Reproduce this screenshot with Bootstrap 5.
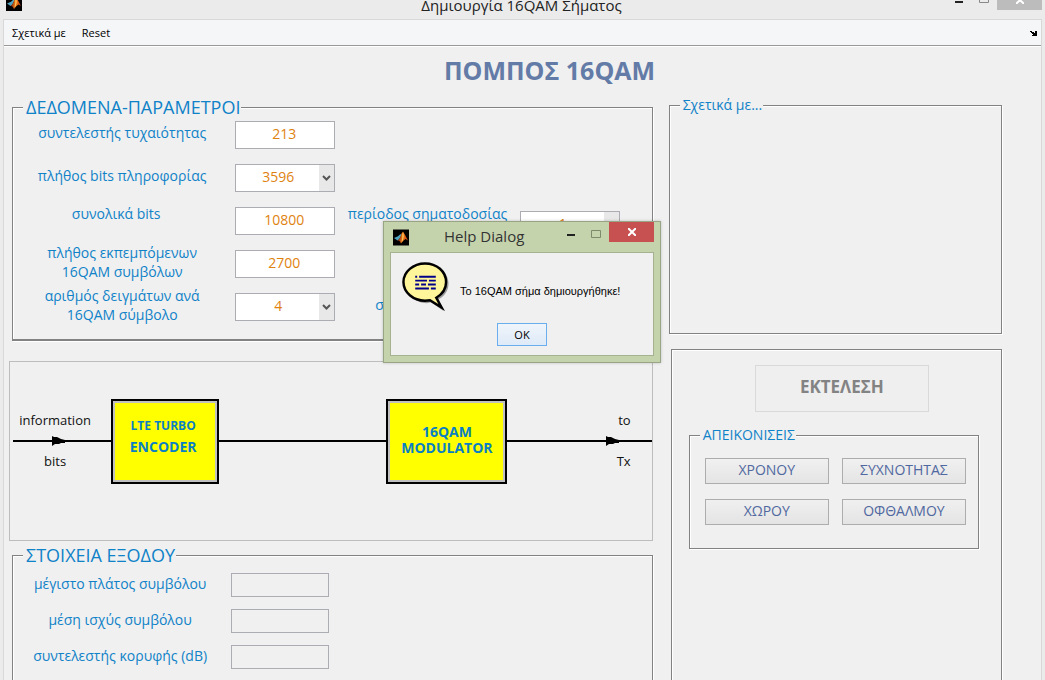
<!DOCTYPE html>
<html lang="el">
<head>
<meta charset="utf-8">
<meta name="viewport" content="width=device-width, initial-scale=1">
<title>Δημιουργία 16QAM Σήματος</title>
<link href="https://cdn.jsdelivr.net/npm/bootstrap@5.3.0/dist/css/bootstrap.min.css" rel="stylesheet">
<style>
  :root { --face: #f0f0f0; --ink: #0f82c8; --etch: #828282; --frame: #d8d8d8; }
  body { background: #ebebeb; font-family: "Open Sans", "Noto Sans", sans-serif; font-size: 14px; line-height: 19px; color: #000; }
  .plain-btn { border: 0; padding: 0; background: none; line-height: 0; }
  .app-window { height: 100vh; }
  .title-bar { height: 19px; padding: 0 3px 0 6px; }
  .title-text { font-size: 15px; line-height: 28px; color: #222; padding-left: 66px; }
  .title-close { width: 45px; height: 28px; margin-bottom: 9px; background: #bcbcbc; }
  .client { border: 1px solid var(--frame); border-bottom: 0; margin: 0 3px; background: var(--face); }
  .menu-strip { height: 26px; padding: 0 4px 0 8px; background: #f5f6f8; border-bottom: 1px solid #999; box-shadow: 0 1px #fff; }
  .menu-strip a { color: #000; font-size: 11px; text-decoration: none; }
  .page-title { font-size: 25px; line-height: 30px; font-weight: 700; color: #637ba7; margin: 9px 0 0; padding-left: 54px; }
  .workspace { display: grid; grid-template-columns: 643fr 333fr; column-gap: 16px; padding: 11px 39px 0 5px; }

  .etched { border: 1px solid var(--etch); box-shadow: 1px 1px #fff, inset 1px 1px #fff; min-width: 0; }
  .etched > legend { float: none; width: auto; margin: 0 0 0 10px; padding: 0 1px 0 3px; background: var(--face); color: var(--ink); }
  .legend-lg { font-size: 18px; line-height: 22px; }
  .legend-sm { font-size: 14px; line-height: 18px; }
  .open-end { border-bottom: 0; }
  .params { margin: 0 0 20px 3px; padding-bottom: 11px; border-bottom-width: 2px; }
  .results { margin-left: 3px; }
  .form-cells { display: grid; grid-template-columns: 222fr 100px 184fr 100px 32px; grid-auto-rows: 43px; align-items: center; margin-top: -5px; }
  .form-cells.outputs { grid-template-columns: 218fr 98px 322fr; grid-auto-rows: 36px; margin-top: 1px; }
  .form-label-cell { text-align: center; color: var(--ink); padding: 0 4px 4px 0; }
  .form-label-cell.raised { align-self: start; padding-top: 5px; padding-bottom: 0; }
  .form-label-cell.period-label { padding-right: 0; }
  .form-label-cell.lead-in { text-align: left; padding-left: 40px; }
  .field { width: 100%; height: 28px; border: 1px solid #abadb3; border-radius: 0; background-color: #fff; color: #e0820f; text-align: center; padding: 0 2px 3px 0; }
  select.field { appearance: none; text-align-last: center; padding-right: 14px;
    background: url("data:image/svg+xml,%3Csvg xmlns='http://www.w3.org/2000/svg' viewBox='0 0 15 26'%3E%3Cpath fill='%23e8e8e8' d='M0 0h15v26H0z'/%3E%3Cpath d='M4 11l3.5 3.5L11 11' fill='none' stroke='%23555' stroke-width='2'/%3E%3C/svg%3E") right center / 15px 26px no-repeat #fff; }
  .field.blank { height: 24px; background: var(--face); }

  .chain { display: flex; align-items: center; height: 180px; padding: 0 0 20px 3px; border: 1px solid #bdbdbd; margin-bottom: 3px; }
  .wire { display: grid; grid-template-rows: 1fr 2px 1fr; height: 84px; font-size: 13px; color: #111; }
  .wire-line { position: relative; background: #000; height: 2px; }
  .wire-line svg { position: absolute; top: -4px; left: 39px; }
  .wire-text { text-align: center; padding-right: 14px; }
  .wire-out .wire-line svg { left: auto; right: 32px; }
  .wire-out .wire-text { text-align: right; padding-right: 21px; }
  .wire-top { align-self: end; padding-bottom: 10px; }
  .wire-bottom { align-self: start; padding-top: 10px; }
  .block { flex: none; width: 108px; height: 85px; border: 2px solid #000; box-shadow: inset 0 0 0 2px #c0c0c0; background: #ff0; color: #0a80c4; font-size: 14px; font-weight: 700; text-align: center; display: flex; flex-direction: column; justify-content: center; }
  .block-enc { line-height: 21px; padding: 0 4px 10px 0; }
  .block-enc small { font-size: 12px; font-weight: 700; }
  .block-mod { width: 121px; line-height: 16px; padding-bottom: 3px; }

  .about { height: 238px; margin-bottom: 15px; }
  .actions { margin-left: 2px; padding: 15px 22px 0 17px; }
  .run-btn { width: 174px; height: 47px; border: 1px solid #d9d9d9; background: #efefef; color: #838383; font-size: 17px; font-weight: 700; padding: 0 0 4px; }
  .plots { margin-top: 14px; }
  .plot-grid { display: grid; grid-template-columns: 1fr 1fr; gap: 15px 13px; padding: 14px 12px 23px 15px; }
  .plot-btn { height: 26px; border: 1px solid #adadad; background: linear-gradient(#f0f0f0, #e4e4e4); color: #5068a0; padding: 0 0 3px; }

  .help-dialog { position: absolute; left: 383px; top: 221px; width: 278px; background: #c5d3ad; border: 1px solid #98a585; padding: 0 6px 6px; box-shadow: 0 0 3px rgba(0,0,0,.2); }
  .help-head { height: 30px; padding-left: 3px; }
  .help-title { font-size: 15px; color: #333; margin: 0 0 0 35px; font-weight: 400; line-height: 28px; }
  .help-close { width: 45px; height: 20px; background: #c75050; }
  .help-body { border: 1px solid #a5b28f; background: var(--face); padding: 9px 10px; }
  .help-text { font: 11px/16px "Liberation Sans", Arial, sans-serif; margin: 0 0 0 10px; padding-top: 8px; white-space: nowrap; }
  .ok-btn { width: 50px; height: 23px; border: 1px solid #6aaeee; background: linear-gradient(#f0f5fa, #deeaf8); font-size: 11px; padding: 0; color: #000; line-height: 20px; }
</style>
</head>
<body>
<svg width="0" height="0" class="position-absolute" aria-hidden="true">
  <defs>
    <linearGradient id="flame" x1="0" x2="1"><stop offset="0" stop-color="#7a1c10"/><stop offset=".5" stop-color="#f0801c"/><stop offset="1" stop-color="#c43a10"/></linearGradient>
    <symbol id="matlab" viewBox="0 0 16 16">
      <path fill="#000" d="M0 0h16v16H0z"/>
      <path fill="#4fa3c0" d="M1 8.500l4-1.800 2.500-2.200 1 1-2.500 4.500-1.500 1z"/>
      <path fill="url(#flame)" d="M4.500 11L7 8.500 8.500 4 10 2l1.500 2.500L15 11l-2.500-1.500-2 1.500L8 14l-1.500-2.500z"/>
      <path fill="#ffc95c" d="M9.500 4l.8-.7.5 3.700-1.300 4.500-1 .8.800-4z"/>
    </symbol>
    <symbol id="arrowhead" viewBox="0 0 14 10"><path d="M0 0l2 1h3l4 2 4 1v3h-4l-2 1H3L0 10z"/></symbol>
  </defs>
</svg>

<div class="app-window d-flex flex-column overflow-hidden position-relative">
  <header class="title-bar d-flex align-items-end flex-shrink-0">
    <svg width="16" height="16" class="flex-shrink-0 mb-2" aria-hidden="true"><use href="#matlab"/></svg>
    <div class="title-text flex-fill text-center">Δημιουργία 16QAM Σήματος</div>
    <div class="d-flex align-items-end">
      <button class="plain-btn pb-3 me-3" aria-label="Ελαχιστοποίηση"><svg width="8" height="2"><path fill="#222" d="M0 0h8v2H0z"/></svg></button>
      <button class="plain-btn pb-3 me-2" aria-label="Μεγιστοποίηση"><svg width="10" height="8"><path fill="none" stroke="#888" d="M.5.5h9v7h-9z"/></svg></button>
      <button class="plain-btn title-close" aria-label="Κλείσιμο"><svg width="8" height="8" class="mt-2"><path stroke="#fff" stroke-width="2" d="M0 0l8 8M8 0L0 8"/></svg></button>
    </div>
  </header>

  <div class="client flex-fill d-flex flex-column">
    <nav class="menu-strip d-flex align-items-center gap-3">
      <a href="#">Σχετικά με</a>
      <a href="#">Reset</a>
      <svg width="7" height="6" class="ms-auto" aria-hidden="true"><path d="M0 1h2v1h2v1h1V1h2v5H2V5h1V4H2V3H1V2H0z"/></svg>
    </nav>
    <h1 class="page-title text-center">ΠΟΜΠΟΣ 16QAM</h1>

    <main class="workspace flex-fill">
      <div class="d-flex flex-column">
        <fieldset class="etched params">
          <legend class="legend-lg">ΔΕΔΟΜΕΝΑ-ΠΑΡΑΜΕΤΡΟΙ</legend>
          <div class="form-cells">
            <label for="seed" class="form-label-cell">συντελεστής τυχαιότητας</label>
            <input id="seed" class="field" value="213"><span></span><span></span><span></span>

            <label for="info" class="form-label-cell">πλήθος bits πληροφορίας</label>
            <select id="info" class="field"><option>3596</option></select><span></span><span></span><span></span>

            <label for="total" class="form-label-cell raised pe-3">συνολικά bits</label>
            <input id="total" class="field" value="10800">
            <label for="period" class="form-label-cell raised period-label">περίοδος σηματοδοσίας</label>
            <select id="period" class="field mt-2"><option>1</option></select><span></span>

            <label for="symbols" class="form-label-cell">πλήθος εκπεμπόμενων<br>16QAM συμβόλων</label>
            <input id="symbols" class="field" value="2700"><span></span><span></span><span></span>

            <label for="samples" class="form-label-cell">αριθμός δειγμάτων ανά<br>16QAM σύμβολο</label>
            <select id="samples" class="field"><option>4</option></select>
            <span class="form-label-cell lead-in">σ</span><span></span><span></span>
          </div>
        </fieldset>

        <section class="chain">
          <div class="wire" style="flex:98">
            <span class="wire-text wire-top">information</span>
            <div class="wire-line"><svg width="14" height="10"><use href="#arrowhead"/></svg></div>
            <span class="wire-text wire-bottom">bits</span>
          </div>
          <div class="block block-enc"><small>LTE TURBO</small><span>ENCODER</span></div>
          <div class="wire" style="flex:167"><span></span><div class="wire-line"></div><span></span></div>
          <div class="block block-mod"><span>16QAM</span><span>MODULATOR</span></div>
          <div class="wire wire-out" style="flex:144">
            <span class="wire-text wire-top">to</span>
            <div class="wire-line"><svg width="14" height="10"><use href="#arrowhead"/></svg></div>
            <span class="wire-text wire-bottom">Tx</span>
          </div>
        </section>

        <fieldset class="etched open-end results flex-fill">
          <legend class="legend-lg">ΣΤΟΙΧΕΙΑ ΕΞΟΔΟΥ</legend>
          <div class="form-cells outputs">
            <label for="peak" class="form-label-cell">μέγιστο πλάτος συμβόλου</label><input id="peak" class="field blank" readonly><span></span>
            <label for="power" class="form-label-cell">μέση ισχύς συμβόλου</label><input id="power" class="field blank" readonly><span></span>
            <label for="crest" class="form-label-cell">συντελεστής κορυφής (dB)</label><input id="crest" class="field blank" readonly><span></span>
          </div>
        </fieldset>
      </div>

      <div class="d-flex flex-column">
        <fieldset class="etched about">
          <legend class="legend-sm">Σχετικά με...</legend>
        </fieldset>
        <section class="etched open-end actions flex-fill">
          <div class="text-center ps-3"><button class="run-btn" disabled>ΕΚΤΕΛΕΣΗ</button></div>
          <fieldset class="etched plots">
            <legend class="legend-sm">ΑΠΕΙΚΟΝΙΣΕΙΣ</legend>
            <div class="plot-grid">
              <button class="plot-btn">ΧΡΟΝΟΥ</button>
              <button class="plot-btn">ΣΥΧΝΟΤΗΤΑΣ</button>
              <button class="plot-btn">ΧΩΡΟΥ</button>
              <button class="plot-btn">ΟΦΘΑΛΜΟΥ</button>
            </div>
          </fieldset>
        </section>
      </div>
    </main>
  </div>

  <div class="help-dialog" role="dialog" aria-labelledby="help-title">
    <div class="help-head d-flex align-items-start">
      <svg width="16" height="17" class="align-self-center" aria-hidden="true"><use href="#matlab"/></svg>
      <h2 id="help-title" class="help-title">Help Dialog</h2>
      <div class="d-flex ms-auto align-items-start">
        <button class="plain-btn pt-2 mt-1 me-3" aria-label="Ελαχιστοποίηση"><svg width="8" height="2"><path fill="#222" d="M0 0h8v2H0z"/></svg></button>
        <button class="plain-btn pt-1 mt-1 me-2" aria-label="Μεγιστοποίηση"><svg width="10" height="8"><path fill="none" stroke="#7d8a6c" d="M.5.5h9v7h-9z"/></svg></button>
        <button class="plain-btn help-close" aria-label="Κλείσιμο"><svg width="8" height="8"><path stroke="#fff" stroke-width="2" d="M0 0l8 8M8 0L0 8"/></svg></button>
      </div>
    </div>
    <div class="help-body">
      <div class="d-flex align-items-center">
        <svg width="49" height="49" viewBox="0 0 49 50" class="flex-shrink-0" aria-hidden="true">
          <path fill="#999" d="M26 3c14 0 22 9 22 19 0 7-4 13-10 16l5 12-13-9-4 1C14 42 4 33 4 22z"/>
          <path fill="#fff59a" stroke="#000" stroke-width="2.500" d="M24 1.500c12 0 21.500 8 21.500 19 0 7-4 12.500-10 16l5.500 10-12-7.500-5 .5C12 39.500 2 31 2 20.500S12 1.500 24 1.500z"/>
          <path stroke="#00008b" stroke-width="2" d="M14 15h2m2 0h17M14 19h12m2 0h7M14 23h4m2 0h5m2 0h8M14 27h14m2 0h5"/>
        </svg>
        <p class="help-text">Το 16QAM σήμα δημιουργήθηκε!</p>
      </div>
      <div class="d-flex justify-content-center pt-2 mt-1"><button class="ok-btn">OK</button></div>
    </div>
  </div>
</div>
<script src="https://cdn.jsdelivr.net/npm/bootstrap@5.3.0/dist/js/bootstrap.bundle.min.js"></script>
</body>
</html>
